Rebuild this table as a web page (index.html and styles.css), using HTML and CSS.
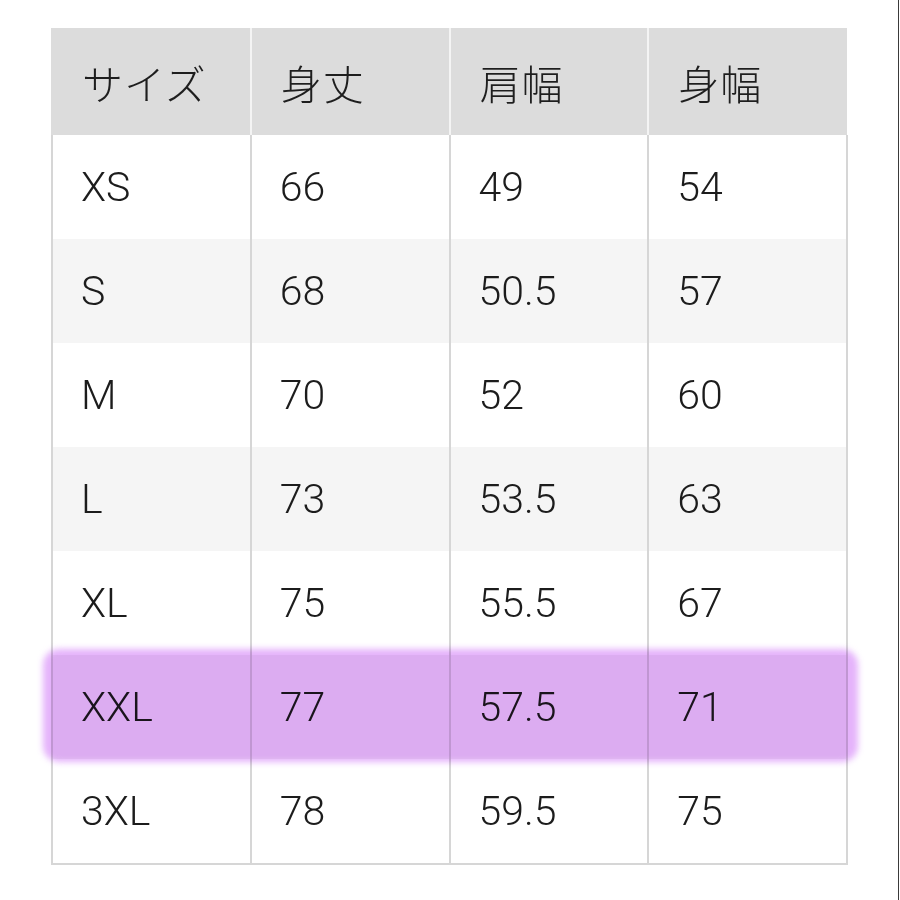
FILE: index.html
```html
<!DOCTYPE html>
<html lang="ja">
<head>
<meta charset="utf-8">
<title>サイズ表</title>
<link rel="stylesheet" href="styles.css">
</head>
<body>
<div class="page">
  <div class="sheet">
    <table class="size-table">
      <thead>
        <tr><th>サイズ</th><th>身丈</th><th>肩幅</th><th>身幅</th></tr>
      </thead>
      <tbody>
        <tr><td>XS</td><td>66</td><td>49</td><td>54</td></tr>
        <tr><td>S</td><td>68</td><td>50.5</td><td>57</td></tr>
        <tr><td>M</td><td>70</td><td>52</td><td>60</td></tr>
        <tr><td>L</td><td>73</td><td>53.5</td><td>63</td></tr>
        <tr><td>XL</td><td>75</td><td>55.5</td><td>67</td></tr>
        <tr><td>XXL</td><td>77</td><td>57.5</td><td>71</td></tr>
        <tr><td>3XL</td><td>78</td><td>59.5</td><td>75</td></tr>
      </tbody>
    </table>
    <div class="marker"></div>
  </div>
</div>
</body>
</html>
```

FILE: styles.css
```css
html, body {
  margin: 0;
  padding: 0;
  background: #ffffff;
}
body {
  width: 900px;
  height: 900px;
  overflow: hidden;
  font-family: Roboto, "Noto Sans CJK JP", sans-serif;
  color: #1c1c1c;
}
.page {
  width: 899px;
  height: 900px;
  border-right: 1px solid #3a3a3a;
  padding-top: 28px;
  box-sizing: border-box;
}
.sheet {
  position: relative;
  margin-left: 51px;
  width: 797px;
}
.size-table {
  width: 797px;
  border-collapse: collapse;
  table-layout: fixed;
}
.size-table th,
.size-table td {
  text-align: left;
  padding: 0 0 0 28px;
  font-weight: 300;
}
.size-table th {
  height: 107px;
  background: #dcdcdc;
  font-family: "Noto Sans CJK JP", sans-serif;
  font-size: 41px;
  font-weight: 300;
  color: #1e1e1e;
  border-left: 2px solid #f4f4f4;
  letter-spacing: 1px;
  padding-left: 29px;
}
.size-table th:first-child {
  border-left: 2px solid #dcdcdc;
}
.size-table td {
  height: 104px;
  font-size: 41px;
  border-left: 2px solid #d6d6d6;
  border-right: 2px solid #d6d6d6;
}
.size-table tbody tr:nth-child(even) td {
  background: #f5f5f5;
}
.size-table tbody tr:last-child td {
  border-bottom: 2px solid #d6d6d6;
}
.marker {
  position: absolute;
  left: -8px;
  top: 621px;
  width: 815px;
  height: 113px;
  border-radius: 16px;
  background: #e5b3fb;
  mix-blend-mode: multiply;
  filter: blur(3px);
}
```
